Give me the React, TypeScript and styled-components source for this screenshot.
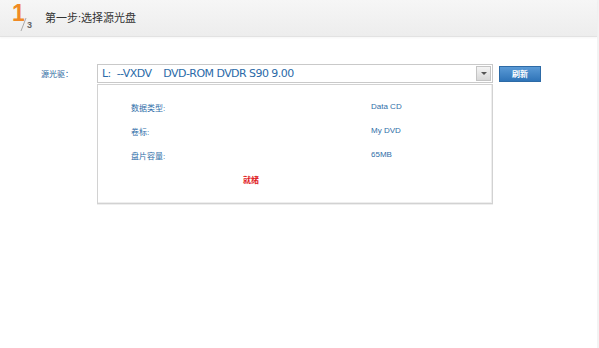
import React from "react";
import styled, { createGlobalStyle } from "styled-components";

const Global = createGlobalStyle`
  html, body { margin: 0; padding: 0; background: #fff; }
  body { font-family: "Liberation Sans", "Noto Sans CJK SC", Arial, sans-serif; }
  #root { width: 599px; height: 348px; overflow: hidden; }
`;

const Page = styled.div`
  width: 599px;
  height: 348px;
  background: #fff;
  border-right: 2px solid #f3f3f3;
  box-sizing: border-box;
`;

const Header = styled.div`
  height: 36px;
  display: flex;
  align-items: center;
  padding-left: 11px;
  background: linear-gradient(#f6f6f6, #ededed);
  border-bottom: 1px solid #e2e2e2;
  box-shadow: 0 1px 2px rgba(0,0,0,0.04);
`;

const StepMark = styled.div`
  position: relative;
  width: 26px;
  height: 30px;
  margin-right: 8px;
`;

const Big = styled.span`
  position: absolute;
  left: 1px;
  top: -1px;
  font-size: 23px;
  font-weight: bold;
  color: #f08a24;
  line-height: 23px;
`;

const Small = styled.span`
  position: absolute;
  left: 16px;
  top: 17px;
  font-size: 9px;
  font-weight: bold;
  color: #666;
`;

const Title = styled.span`
  font-size: 11px;
  color: #333;
  padding-bottom: 2px;
`;

const Body = styled.div`
  display: flex;
  padding: 27px 0 0 41px;
`;

const Label = styled.div`
  width: 56px;
  padding-top: 4px;
  font-size: 8px;
  color: #2a659e;
`;

const Column = styled.div`
  width: 396px;
  display: flex;
  flex-direction: column;
`;

const SelectRow = styled.div`
  display: flex;
  align-items: center;
`;

const Select = styled.div`
  flex: 1;
  height: 17px;
  border: 1px solid #c9c9c9;
  display: flex;
  align-items: center;
  background: #fff;
`;

const SelectText = styled.span`
  flex: 1;
  padding-left: 4px;
  font-family: "DejaVu Sans", "Liberation Sans", sans-serif;
  font-size: 11px;
  letter-spacing: -0.55px;
  color: #2a6aa8;
  white-space: pre;
`;

const Arrow = styled.div`
  width: 15px;
  height: 15px;
  margin-right: 1px;
  background: linear-gradient(#f4f4f4, #d8d8d8);
  border: 1px solid #c4c4c4;
  box-sizing: border-box;
  display: flex;
  align-items: center;
  justify-content: center;
  &::after {
    content: "";
    border-left: 3px solid transparent;
    border-right: 3px solid transparent;
    border-top: 3px solid #555;
  }
`;

const Refresh = styled.button`
  position: relative;
  margin-left: 6px;
  margin-right: -48px;
  width: 42px;
  height: 16px;
  border: 1px solid #2d6aa6;
  background: linear-gradient(#5a9ad6, #2f74b8);
  color: #fff;
  font-family: "Noto Sans CJK SC", sans-serif;
  font-weight: bold;
  font-size: 8px;
  padding: 0;
`;

const Panel = styled.div`
  margin-top: 1px;
  height: 101px;
  border: 1px solid #d2d2d2;
  box-shadow: inset -1px -1px 0 #eee, 0 1px 0 #eee;
  display: flex;
  flex-direction: column;
  padding: 17px 0 0 33px;
  box-sizing: content-box;
`;

const InfoRow = styled.div`
  display: grid;
  grid-template-columns: 240px 1fr;
  height: 24px;
  font-size: 8px;
  color: #2f6ea8;
`;

const Status = styled.div`
  padding-left: 112px;
  font-family: "Noto Sans CJK SC", sans-serif;
  font-size: 8px;
  font-weight: bold;
  color: #e0201c;
`;

const rows: [string, string][] = [
  ["数据类型:", "Data CD"],
  ["卷标:", "My DVD"],
  ["盘片容量:", "65MB"],
];

export default function App() {
  return (
    <Page>
      <Global />
      <Header>
        <StepMark>
          <Big>1</Big>
          <svg width="26" height="30" style={{ position: "absolute", left: 0, top: 0 }}>
            <line x1="10" y1="28" x2="15" y2="15" stroke="#aaa" strokeWidth="1" />
          </svg>
          <Small>3</Small>
        </StepMark>
        <Title>第一步:选择源光盘</Title>
      </Header>
      <Body>
        <Label>源光驱：</Label>
        <Column>
          <SelectRow>
            <Select>
              <SelectText>{"L:  --VXDV    DVD-ROM DVDR S90 9.00"}</SelectText>
              <Arrow />
            </Select>
            <Refresh>刷新</Refresh>
          </SelectRow>
          <Panel>
            {rows.map(([k, v]) => (
              <InfoRow key={k}>
                <span>{k}</span>
                <span>{v}</span>
              </InfoRow>
            ))}
            <Status>就绪</Status>
          </Panel>
        </Column>
      </Body>
    </Page>
  );
}
